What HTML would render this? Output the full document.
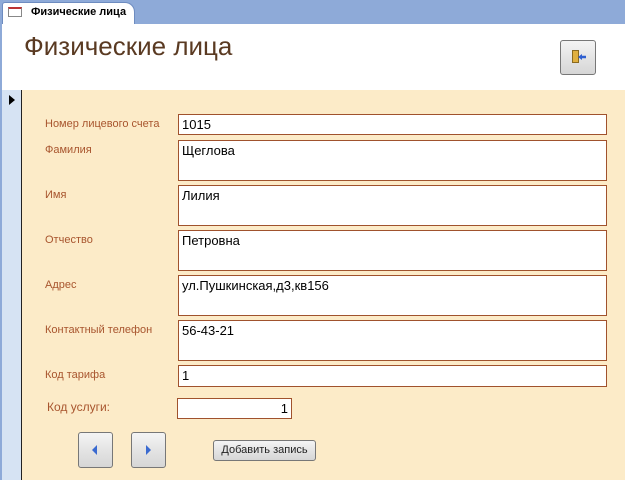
<!DOCTYPE html>
<html><head><meta charset="utf-8"><style>
*{margin:0;padding:0;box-sizing:border-box}
body{width:625px;height:480px;overflow:hidden;position:relative;background:#fff;font-family:"Liberation Sans",sans-serif}
.abs{position:absolute}
.lbl{position:absolute;left:45px;font-size:11px;color:#a8552e}
.box{position:absolute;left:178px;width:429px;background:#fff;border:1px solid #a0522d;font-size:13px;padding:2px 3px;color:#000}
.btn{position:absolute;border:1px solid #777;border-radius:3px;background:linear-gradient(#f4f4f4,#e4e4e4 50%,#d6d6d6)}
</style></head><body>
<div class="abs" style="left:0;top:0;width:625px;height:24px;background:#8eaad8"></div>
<div class="abs" style="left:2px;top:2px;width:133px;height:22px;background:#fff;border-radius:3px 10px 0 0;border:1px solid #6e8cc0;border-bottom:none"></div>
<div class="abs" style="left:8px;top:7px;width:14px;height:10px;border:1px solid #888;border-top:2px solid #b33"></div>
<div class="abs" style="left:31px;top:6px;font-size:11px;font-weight:bold">Физические лица</div>
<div class="abs" style="left:0;top:24px;width:2px;height:456px;background:#8eaad8"></div>
<div class="abs" style="left:24px;top:31px;font-size:26px;color:#5a3a22">Физические лица</div>
<div class="btn" style="left:560px;top:40px;width:36px;height:35px"></div>
<div class="abs" style="left:572px;top:50px;width:7px;height:13px;background:#e0b040;border:1px solid #8a6a20"></div>
<div class="abs" style="left:578px;top:54px;width:8px;height:6px;background:#3060d0;clip-path:polygon(0 50%,50% 0,50% 30%,100% 30%,100% 70%,50% 70%,50% 100%)"></div>
<div class="abs" style="left:2px;top:90px;width:20px;height:390px;background:#d6e3f3;border-right:1px solid #222"></div>
<div class="abs" style="left:9px;top:95px;width:0;height:0;border-left:6px solid #000;border-top:5px solid transparent;border-bottom:5px solid transparent"></div>
<div class="abs" style="left:22px;top:90px;width:603px;height:390px;background:#fcebc8"></div>
<div class="lbl" style="top:118px">Номер лицевого счета</div><div class="box" style="top:114px;height:21px">1015</div>
<div class="lbl" style="top:144px">Фамилия</div><div class="box" style="top:140px;height:41px">Щеглова</div>
<div class="lbl" style="top:189px">Имя</div><div class="box" style="top:185px;height:41px">Лилия</div>
<div class="lbl" style="top:234px">Отчество</div><div class="box" style="top:230px;height:41px">Петровна</div>
<div class="lbl" style="top:279px">Адрес</div><div class="box" style="top:275px;height:41px">ул.Пушкинская,д3,кв156</div>
<div class="lbl" style="top:324px">Контактный телефон</div><div class="box" style="top:320px;height:41px">56-43-21</div>
<div class="lbl" style="top:369px">Код тарифа</div><div class="box" style="top:365px;height:22px">1</div>
<div class="lbl" style="top:400px;left:47px;font-size:12px">Код услуги:</div>
<div class="box" style="left:177px;top:398px;width:115px;height:21px;text-align:right">1</div>
<div class="btn" style="left:78px;top:432px;width:35px;height:36px"></div>
<div class="abs" style="left:92px;top:445px;border-right:5px solid #3a6ad0;border-top:5px solid transparent;border-bottom:5px solid transparent"></div>
<div class="btn" style="left:131px;top:432px;width:35px;height:36px"></div>
<div class="abs" style="left:146px;top:445px;border-left:5px solid #3a6ad0;border-top:5px solid transparent;border-bottom:5px solid transparent"></div>
<div class="btn" style="left:213px;top:440px;width:103px;height:21px;font-size:11px;text-align:center;line-height:19px;color:#222">Добавить запись</div>
</body></html>
